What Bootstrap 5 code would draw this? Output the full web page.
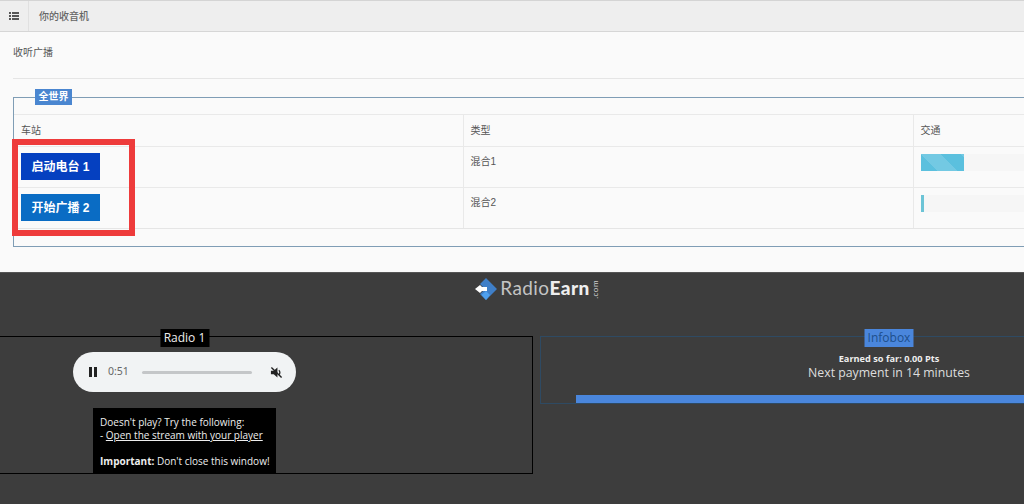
<!DOCTYPE html>
<html lang="zh">
<head>
<meta charset="utf-8">
<title>你的收音机</title>
<link href="https://cdn.jsdelivr.net/npm/bootstrap@5.3.0/dist/css/bootstrap.min.css" rel="stylesheet">
<style>
html,body{height:504px;overflow:hidden;background:#3d3d3d}
body{font-family:"Liberation Sans","Noto Sans CJK SC",sans-serif;font-size:10px;color:#555;position:relative}
.page-wrap{width:1400px;height:504px;display:flex;flex-direction:column}
.top-area{height:272px;background:#fafafa;flex:none}
.head-bar{height:32px;background:#eeeeee;border-top:1px solid #d4d4d4;border-bottom:1px solid #d6d6d6}
.menu-cell{width:29px;border-right:1px solid #e0e0e0}
.head-title{padding-left:10px;font-size:10px;color:#666;font-weight:500}
.content-area{padding:14px 0 0 13px}
.listen-text{font-size:10px;color:#555;line-height:13px;border-bottom:1px solid #e5e5e5;height:33px}
.world-box{position:relative;margin-top:18px;height:150px;border:1px solid #7f9db5;padding-top:16px}
.world-tag{position:absolute;left:21px;top:-9px;width:37px;height:16px;line-height:16px;text-align:center;background:#4a86d0;color:#fff;font-size:10px;font-weight:700}
.net-table{width:1349px;table-layout:fixed;margin:0;background:transparent;--bs-table-bg:transparent;font-size:10px;color:#555}
.net-table th,.net-table td{border:0;border-top:1px solid #e9e9e9;border-left:1px solid #e9e9e9;padding:0 7px;vertical-align:top;font-weight:400;color:#555}
.net-table th:first-child,.net-table td:first-child{border-left:0;width:449px}
.net-table tr:last-child td{border-bottom:1px solid #e5e5e5}
.net-table th{height:32px;line-height:31px}
.net-table td{height:41px;padding-top:8px;line-height:13px}
.start-btn{width:79px;height:27px;padding:2px 0 0;border:0;border-radius:0;font-size:12px;font-weight:700;color:#fff;line-height:25px;display:block}
.start-one{background:#0540c0}
.start-two{background:#0a6cc4}
.net-table td.btn-cell{padding-top:6px}
.traffic-track{height:17px;width:430px;border-radius:0;background:#f6f6f6;margin-top:-1px}
.traffic-fill{background-color:#5bc0de}
.wide-fill{width:43px;background-size:40px 40px}
.thin-fill{width:3px;background-color:#6cc4d6}
.alert-box{position:absolute;left:12px;top:139px;width:123px;height:97px;border:6px solid #ee3b3b}
.dark-area{flex:1;background:#3d3d3d;border-top:1px solid #555;color:#fff;font-family:"Open Sans","Noto Sans",sans-serif}
.logo-row{height:39px;padding:4px 0 0 49px;width:1024px;gap:2px}
.logo-word{font-family:"Lato",sans-serif;font-size:19px;color:#c4c4c4;letter-spacing:.4px;line-height:22px}
.logo-word b{font-weight:900;color:#eee}
.logo-com{font-size:8px;color:#ccc;writing-mode:vertical-rl;transform:rotate(180deg);line-height:7px;font-family:"Lato",sans-serif;margin-top:3px;letter-spacing:.5px}
.panel-row{margin-left:-164px;margin-top:24px;gap:7px;width:1410px}
.radio-panel,.info-panel{position:relative;text-align:center}
.radio-panel{width:697px;height:138px;border:1px solid #000}
.info-panel{width:698px;height:68px;border:1px solid #2e4a63}
.panel-tag{position:absolute;left:50%;transform:translateX(-50%);top:-8px;height:18px;width:49px;line-height:17px;font-size:12px}
.radio-tag{background:#000;color:#eee}
.info-tag{background:#4a86dc;color:#1d4f8c}
.player-pill{width:223px;height:40px;border-radius:20px;background:#f1f3f4;margin:15px auto 0;padding:0 13px 0 16px;color:#666;font-size:10.5px;font-family:"Noto Sans",sans-serif}
.pause-icon{margin-right:11px}
.seek-line{flex:1;height:3px;border-radius:2px;background:#c4c6c8;margin:0 18px 0 13px}
.hint-box{width:183px;height:65px;margin:16px auto 0;background:#000;color:#eee;text-align:left;padding:8px 7px;font-size:10px;line-height:13px;white-space:nowrap}
.hint-box a{color:#eee}
.earned-line{margin-top:16px;font-size:9.2px;font-weight:700;line-height:12px;color:#eee}
.next-line{font-size:12.3px;line-height:15px;color:#ddd}
.pay-bar{position:absolute;left:35px;right:0;bottom:0;height:8px;background:#4a86dc;border-radius:0}
</style>
</head>
<body>
<div class="page-wrap">
  <div class="top-area">
    <div class="head-bar d-flex">
      <div class="menu-cell d-flex align-items-center justify-content-center">
        <svg width="10" height="8" viewBox="0 0 10 8"><g fill="#555"><rect x="0" y="0" width="2" height="2"/><rect x="3" y="0" width="7" height="2"/><rect x="0" y="3" width="2" height="2"/><rect x="3" y="3" width="7" height="2"/><rect x="0" y="6" width="2" height="2"/><rect x="3" y="6" width="7" height="2"/></g></svg>
      </div>
      <div class="head-title d-flex align-items-center">你的收音机</div>
    </div>
    <div class="content-area">
      <div class="listen-text">收听广播</div>
      <div class="world-box">
        <div class="world-tag">全世界</div>
        <table class="table net-table">
          <thead><tr><th>车站</th><th>类型</th><th>交通</th></tr></thead>
          <tbody>
            <tr>
              <td class="btn-cell"><button type="button" class="btn start-btn start-one">启动电台 1</button></td>
              <td>混合1</td>
              <td><div class="progress traffic-track"><div class="progress-bar progress-bar-striped traffic-fill wide-fill"></div></div></td>
            </tr>
            <tr>
              <td class="btn-cell"><button type="button" class="btn start-btn start-two">开始广播 2</button></td>
              <td>混合2</td>
              <td><div class="progress traffic-track"><div class="progress-bar traffic-fill thin-fill"></div></div></td>
            </tr>
          </tbody>
        </table>
      </div>
    </div>
  </div>
  <div class="dark-area">
    <div class="logo-row d-flex align-items-start justify-content-center">
      <svg width="24" height="24" viewBox="0 0 24 24"><path d="M12 1 23 12 12 23 6 17 11 12 6 7z" fill="#3f7fc8"/><path d="M12 14 16 18 12 23 7.500 18z" fill="#4fa0ee"/><path d="M1 12 6 8 8 10H13V14H8L6 16z" fill="#fff"/></svg>
      <span class="logo-word">Radio<b>Earn</b></span><span class="logo-com">.com</span>
    </div>
    <div class="panel-row d-flex">
      <div class="radio-panel">
        <div class="panel-tag radio-tag">Radio 1</div>
        <div class="player-pill d-flex align-items-center">
          <svg class="pause-icon" width="8" height="10" viewBox="0 0 8 10"><path d="M0 0H3V10H0zM5 0H8V10H5z" fill="#222"/></svg>
          <span>0:51</span>
          <div class="seek-line"></div>
          <svg width="13" height="13" viewBox="0 0 14 14"><path d="M1 5H4L8 1.500V12.500L4 9H1z" fill="#222"/><path d="M9.500 4.500C11 5.500 11 8.500 9.500 9.500" stroke="#222" fill="none" stroke-width="1.400"/><path d="M1.500 1.500 12.500 12.500" stroke="#222" stroke-width="1.500"/></svg>
        </div>
        <div class="hint-box">Doesn't play? Try the following:<br>- <a href="#">Open the stream with your player</a><br><br><b>Important:</b> Don't close this window!</div>
      </div>
      <div class="info-panel">
        <div class="panel-tag info-tag">Infobox</div>
        <div class="earned-line">Earned so far: 0.00 Pts</div>
        <div class="next-line">Next payment in 14 minutes</div>
        <div class="pay-bar"></div>
      </div>
    </div>
  </div>
</div>
<div class="alert-box"></div>
</body>
</html>
